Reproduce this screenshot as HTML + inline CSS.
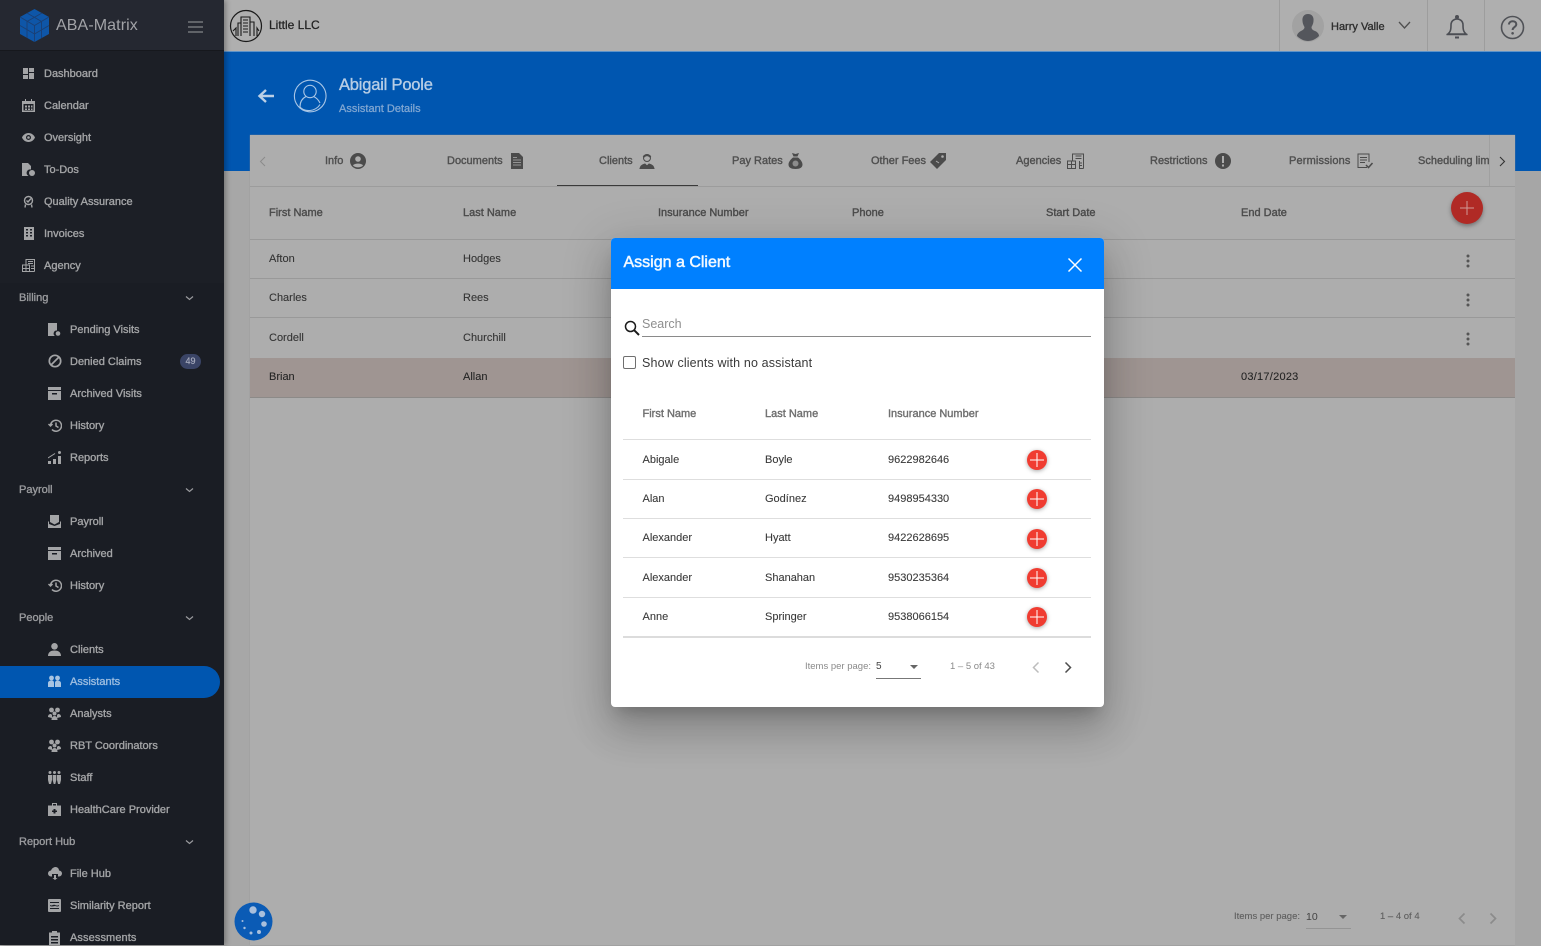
<!DOCTYPE html>
<html><head><meta charset="utf-8"><style>
html,body{margin:0;padding:0;width:1541px;height:945px;overflow:hidden;background:#a6a6a6;font-family:"Liberation Sans",Arial,sans-serif}
.a{position:absolute}
.t{position:absolute;white-space:nowrap;line-height:16px;transform:translateY(-7px)}
.s{font-size:11px;color:#a3a4a6;-webkit-text-stroke:.35px #a3a4a6}
.g{font-size:11px;color:#9a9b9e;-webkit-text-stroke:.35px #9a9b9e}
.h{font-size:11px;color:#4c4c4c;-webkit-text-stroke:.4px #4c4c4c}
.r{font-size:11px;color:#333;-webkit-text-stroke:.1px #333}
.th{font-size:11px;color:#707070;-webkit-text-stroke:.4px #707070}
.td{font-size:11px;color:#3a3a3a;-webkit-text-stroke:.1px #3a3a3a}
.tab{font-size:11px;color:#505050;-webkit-text-stroke:.4px #505050}
.i{position:absolute;fill:#a3a4a6}
.l{position:absolute;height:1px}
</style></head><body>
<div class="a" style="left:224px;top:0;width:1317px;height:51px;background:#afafaf"></div>
<div class="a" style="left:224px;top:51px;width:1317px;height:120px;background:#0056b0"></div>
<div class="a" style="left:224px;top:51px;width:1317px;height:1px;background:#5d93c9"></div>
<div class="a" style="left:224px;top:171px;width:26px;height:774px;background:#a7a7a7"></div>
<div class="a" style="left:250px;top:135px;width:1265px;height:810px;background:#adadad;box-shadow:0 0 1px #8f8f8f"></div>
<div class="a" style="left:1515px;top:171px;width:26px;height:774px;background:#a6a6a6"></div>

<!-- top bar -->
<svg class="a" style="left:229px;top:9px" width="34" height="34" viewBox="0 0 34 34" fill="none" stroke="#1a1a1a"><circle cx="17" cy="17" r="15.500" stroke-width="1.200"/><path d="M12 27V8h9v19M9 27V14h3M21 13h4v14M4 22l3-3v8M30 22l-2-3v8M14 11h5M14 14h5M14 17h5M14 20h5M14 23h5" stroke-width="1.100"/></svg>
<div class="t" style="left:269px;top:24px;font-size:12px;color:#222;-webkit-text-stroke:.25px #222">Little LLC</div>
<div class="a" style="left:1279px;top:0;width:1px;height:51px;background:#9d9d9d"></div>
<div class="a" style="left:1427px;top:0;width:1px;height:51px;background:#9d9d9d"></div>
<div class="a" style="left:1484px;top:0;width:1px;height:51px;background:#9d9d9d"></div>
<svg class="a" style="left:1292px;top:10px" width="32" height="32" viewBox="0 0 32 32"><circle cx="16" cy="16" r="16" fill="#a2a2a2"/><path d="M16 4c4 0 6 3 5.500 7-.2 3-1.500 5-2 6 0 2 1 3 3.500 4s4 3 4 5c-3 3-7 5-11 5s-8-2-11-5c0-2 2-4 4-5s3.500-2 3.500-4c-.5-1-1.800-3-2-6C10 7 12 4 16 4z" fill="#54565c"/></svg>
<div class="t" style="left:1331px;top:26px;font-size:11px;color:#2f2f2f;-webkit-text-stroke:.35px #2f2f2f">Harry Valle</div>
<svg class="a" style="left:1398px;top:21px" width="13" height="9" viewBox="0 0 13 9" fill="none" stroke="#4f4f4f" stroke-width="1.300"><path d="M1 1l5.500 6L12 1"/></svg>
<svg class="a" style="left:1445px;top:14px" width="24" height="25" viewBox="0 0 24 25" fill="none" stroke="#4c4e54" stroke-width="1.600"><path d="M3 20c2-2 3-3 3-9 0-4 3-6 6-6s6 2 6 6c0 6 1 7 3 9zM1.500 20.500h21"/><circle cx="12" cy="3" r="1.200" fill="#4c4e54"/><path d="M10 23.500h4" stroke-width="2"/></svg>
<svg class="a" style="left:1500px;top:15px" width="25" height="25" viewBox="0 0 25 25" fill="none" stroke="#505257" stroke-width="1.600"><circle cx="12.500" cy="12.500" r="11"/><path d="M8.800 9.500c.3-2.200 2-3.300 3.800-3.300 2.200 0 3.700 1.300 3.700 3.100 0 2.800-3.700 2.800-3.700 5.700" stroke-width="2"/><circle cx="12.600" cy="18.300" r="1.300" fill="#505257" stroke="none"/></svg>

<!-- header -->
<svg class="a" style="left:257px;top:88px" width="18" height="16" viewBox="0 0 18 16" fill="none" stroke="#bcd0e6" stroke-width="2.400"><path d="M17 8H3M9 2L2.500 8 9 14"/></svg>
<svg class="a" style="left:293px;top:79px" width="34" height="34" viewBox="0 0 34 34" fill="none" stroke="#a9c6e6" stroke-width="1.100"><path d="M9 3.500A15.800 15.800 0 1 1 5 27"/><path d="M5 27A15.800 15.800 0 0 1 9 3.500"/><circle cx="17" cy="12.500" r="6.200"/><path d="M7 28c0-6 3-9 6-10.500M27 24c-1.500-3-4-5.500-6.500-6.500M7 28c2 2.500 6 3.800 10 3.500 4-.3 8-2.500 10-6"/></svg>
<div class="t" style="left:339px;top:84px;font-size:16.500px;color:#b7cde5;-webkit-text-stroke:.35px #b7cde5;letter-spacing:-.2px">Abigail Poole</div>
<div class="t" style="left:339px;top:108px;font-size:11px;color:#7fa6d2;-webkit-text-stroke:.3px #7fa6d2;letter-spacing:.02px">Assistant Details</div>

<!-- tabs -->
<svg class="a" style="left:259px;top:156px" width="7" height="11" viewBox="0 0 7 11" fill="none" stroke="#8b8b8b"><path d="M6 1L1.500 5.500 6 10"/></svg>
<div class="t tab" style="left:325px;top:160px">Info</div>
<svg class="a" style="left:350px;top:153px" width="16" height="16" viewBox="0 0 16 16"><circle cx="8" cy="8" r="8" fill="#4b4b4b"/><circle cx="8" cy="6" r="2.800" fill="#adadad"/><path d="M3 12.500c1-2.500 9-2.500 10 0-2.500 2.500-7.500 2.500-10 0z" fill="#adadad"/></svg>
<div class="t tab" style="left:447px;top:160px">Documents</div>
<svg class="a" style="left:510px;top:153px" width="14" height="16" viewBox="0 0 14 16"><path d="M1 0h8l4 4v12H1z" fill="#4b4b4b"/><path d="M3 7h8M3 9.500h8M3 12h8M3 4.500h4" stroke="#adadad" stroke-width=".8"/></svg>
<div class="t tab" style="left:599px;top:160px">Clients</div>
<svg class="a" style="left:639px;top:153px" width="16" height="16" viewBox="0 0 16 16" fill="none" stroke="#4b4b4b"><circle cx="8" cy="5" r="3.500"/><path d="M4.500 4c2-2.500 5-2.500 7 0" stroke-width="2"/><path d="M1 15.500c.5-3 3-4 5-4.500l2 2 2-2c2 .5 4.500 1.500 5 4.500z" fill="#4b4b4b"/></svg>
<div class="a" style="left:557px;top:185px;width:141px;height:1px;background:#3a3a3a"></div>
<div class="t tab" style="left:732px;top:160px">Pay Rates</div>
<svg class="a" style="left:788px;top:153px" width="15" height="16" viewBox="0 0 15 16"><path d="M4 0l3.500 1L11 0 9.500 3.500h-4zM5 4.500h5c2.500 2 4.500 4.500 4.500 7 0 3-2.500 4.500-7 4.500s-7-1.500-7-4.500c0-2.500 2-5 4.500-7z" fill="#4b4b4b"/><circle cx="7.500" cy="10.500" r="3" fill="#8d8d8d"/></svg>
<div class="t tab" style="left:871px;top:160px">Other Fees</div>
<svg class="a" style="left:930px;top:153px" width="16" height="16" viewBox="0 0 16 16"><path d="M9 0h7v7l-9 9-7-7z" fill="#4b4b4b"/><circle cx="12.500" cy="3.500" r="1.300" fill="#adadad"/><path d="M6 8l3 2" stroke="#adadad"/></svg>
<div class="t tab" style="left:1016px;top:160px">Agencies</div>
<svg class="a" style="left:1067px;top:153px" width="17" height="16" viewBox="0 0 17 16" fill="none" stroke="#4b4b4b"><path d="M5.500 8V1h11v14.500M.5 15.500V8h8v7.500zM.5 11.500h8M4.500 8v7.500M12.500 8v7.500h4M8.500 3h6M8.500 5.500h6M12 10h3M12 12.500h3" stroke-width="1"/></svg>
<div class="t tab" style="left:1150px;top:160px">Restrictions</div>
<svg class="a" style="left:1215px;top:153px" width="16" height="16" viewBox="0 0 16 16"><circle cx="8" cy="8" r="8" fill="#4b4b4b"/><rect x="7" y="3" width="2" height="7" fill="#adadad"/><rect x="7" y="11.500" width="2" height="2" fill="#adadad"/></svg>
<div class="t tab" style="left:1289px;top:160px;letter-spacing:.15px">Permissions</div>
<svg class="a" style="left:1357px;top:153px" width="16" height="16" viewBox="0 0 16 16" fill="none" stroke="#4b4b4b"><path d="M10 14.500H1V1h11v8M3 4.500h7M3 7h7M3 9.500h5"/><path d="M9 12l2.500 2.500L15.500 10" stroke-width="1.500"/></svg>
<div class="a" style="left:1250px;top:135px;width:240px;height:51px;overflow:hidden"><div class="t tab" style="left:168px;top:25px">Scheduling limits</div></div>
<div class="a" style="left:1489px;top:135px;width:1px;height:51px;background:#a0a0a0"></div>
<svg class="a" style="left:1499px;top:156px" width="7" height="11" viewBox="0 0 7 11" fill="none" stroke="#333" stroke-width="1.100"><path d="M1 1l4.500 4.500L1 10"/></svg>
<div class="l" style="left:250px;top:186px;width:1265px;background:#9c9c9c"></div>

<!-- bg table -->
<div class="t h" style="left:269px;top:212px">First Name</div>
<div class="t h" style="left:463px;top:212px">Last Name</div>
<div class="t h" style="left:658px;top:212px">Insurance Number</div>
<div class="t h" style="left:852px;top:212px">Phone</div>
<div class="t h" style="left:1046px;top:212px">Start Date</div>
<div class="t h" style="left:1241px;top:212px">End Date</div>
<div class="a" style="left:1451px;top:192px;width:32px;height:32px;border-radius:50%;background:#b02a25;box-shadow:0 2px 4px rgba(0,0,0,.35)"></div>
<svg class="a" style="left:1459px;top:200px" width="16" height="16" viewBox="0 0 16 16" stroke="#d09a97" stroke-width="1"><path d="M8 1v14M1 8h14"/></svg>
<div class="l" style="left:250px;top:239px;width:1265px;background:#999"></div>
<div class="l" style="left:250px;top:278px;width:1265px;background:#999"></div>
<div class="l" style="left:250px;top:317px;width:1265px;background:#999"></div>
<div class="a" style="left:250px;top:358px;width:1265px;height:39px;background:#9f9592;border-bottom:1px solid #8c8a88"></div>
<div class="t r" style="left:269px;top:258px">Afton</div><div class="t r" style="left:463px;top:258px">Hodges</div>
<div class="t r" style="left:269px;top:297px">Charles</div><div class="t r" style="left:463px;top:297px">Rees</div>
<div class="t r" style="left:269px;top:337px">Cordell</div><div class="t r" style="left:463px;top:337px">Churchill</div>
<div class="t r" style="left:269px;top:376px;color:#222">Brian</div><div class="t r" style="left:463px;top:376px;color:#222">Allan</div>
<div class="t r" style="left:1241px;top:376px;color:#222;letter-spacing:.25px">03/17/2023</div>
<svg class="a" style="left:1465px;top:254px" width="6" height="14" fill="#555"><circle cx="3" cy="2" r="1.500"/><circle cx="3" cy="7" r="1.500"/><circle cx="3" cy="12" r="1.500"/></svg>
<svg class="a" style="left:1465px;top:293px" width="6" height="14" fill="#555"><circle cx="3" cy="2" r="1.500"/><circle cx="3" cy="7" r="1.500"/><circle cx="3" cy="12" r="1.500"/></svg>
<svg class="a" style="left:1465px;top:332px" width="6" height="14" fill="#555"><circle cx="3" cy="2" r="1.500"/><circle cx="3" cy="7" r="1.500"/><circle cx="3" cy="12" r="1.500"/></svg>

<!-- bottom pager -->
<div class="t" style="left:1234px;top:916px;font-size:9.500px;color:#5e5e5e;-webkit-text-stroke:.1px #5e5e5e">Items per page:</div>
<div class="t" style="left:1306px;top:916px;font-size:10.500px;color:#444">10</div>
<div class="l" style="left:1306px;top:928px;width:45px;background:#949494"></div>
<svg class="a" style="left:1339px;top:915px" width="8" height="4" fill="#666"><path d="M0 0h8L4 4z"/></svg>
<div class="t" style="left:1380px;top:916px;font-size:9.500px;color:#5e5e5e;-webkit-text-stroke:.1px #5e5e5e">1 – 4 of 4</div>
<svg class="a" style="left:1457px;top:912px" width="9" height="13" fill="none" stroke="#8b8b8b" stroke-width="1.700"><path d="M7.500 1.500l-5 5 5 5"/></svg>
<svg class="a" style="left:1489px;top:912px" width="9" height="13" fill="none" stroke="#8b8b8b" stroke-width="1.700"><path d="M1.500 1.500l5 5-5 5"/></svg>

<!-- sidebar -->
<div class="a" style="left:0;top:0;width:224px;height:945px;background:#1c1f26;box-shadow:2px 0 5px rgba(0,0,0,.3)"></div>
<div class="a" style="left:0;top:0;width:224px;height:51px;background:#252831;border-bottom:1px solid #16181d;box-sizing:border-box"></div>
<svg class="a" style="left:20px;top:9px" width="29" height="33" viewBox="0 0 29 33"><path d="M14.500 0L29 8v17l-14.500 8L0 25V8z" fill="#0e56a8"/><path d="M14.500 16.500V33M14.500 16.500L0 8M14.500 16.500L29 8M7 4l14.500 8.500v16.500M22 4L7 12.500V29M0 16.500l14.500 8.500L29 16.500" stroke="#1b3f73" stroke-width=".9" fill="none"/></svg>
<div class="t" style="left:56px;top:25px;font-size:16px;color:#a2a3a7;letter-spacing:.1px">ABA-Matrix</div>
<svg class="a" style="left:188px;top:21px" width="15" height="12" stroke="#85868a" stroke-width="1.200"><path d="M0 1h15M0 6h15M0 11h15"/></svg>

<div class="t s" style="left:44px;top:73px">Dashboard</div>
<svg class="i" style="left:23px;top:68px" width="11" height="11"><path d="M0 0h5v6H0zM6 0h5v4H6zM0 7h5v4H0zM6 5h5v6H6z"/></svg>
<div class="t s" style="left:44px;top:105px">Calendar</div>
<svg class="i" style="left:22px;top:99px" width="13" height="13" viewBox="0 0 13 13"><path d="M3 0h1v2h5V0h1v2h3v11H0V2h3zM1.500 5v6.500h10V5zM3 6.500h2v2H3zM6 6.500h2v2H6zM9 6.500h1.500v2H9zM3 9.500h2V11H3zM6 9.500h2V11H6zM9 9.500h1.500V11H9z"/></svg>
<div class="t s" style="left:44px;top:137px">Oversight</div>
<svg class="i" style="left:22px;top:133px" width="13" height="9" viewBox="0 0 13 9"><path fill-rule="evenodd" d="M6.500 0C9.500 0 12 2 13 4.500 12 7 9.500 9 6.500 9S1 7 0 4.500C1 2 3.500 0 6.500 0zm0 2a2.500 2.500 0 1 0 0 5 2.500 2.500 0 0 0 0-5z"/><circle cx="6.500" cy="4.500" r="1.300"/></svg>
<div class="t s" style="left:44px;top:169px">To-Dos</div>
<svg class="i" style="left:22px;top:163px" width="13" height="13" viewBox="0 0 13 13"><path d="M0 0h6l3 3v3.500A3.500 3.500 0 0 0 6.500 13H0z"/><circle cx="10" cy="10" r="3"/></svg>
<div class="t s" style="left:44px;top:201px">Quality Assurance</div>
<svg class="a" style="left:23px;top:195px" width="11" height="13" viewBox="0 0 11 13" fill="none" stroke="#a3a4a6" stroke-width="1.400"><circle cx="5.500" cy="5.500" r="4"/><path d="M3.500 5.500l1.500 1.500L8 3.500M2.500 9.500L2 12.500M8.500 9.500l.5 3"/></svg>
<div class="t s" style="left:44px;top:233px">Invoices</div>
<svg class="i" style="left:24px;top:227px" width="10" height="13" viewBox="0 0 10 13"><path fill-rule="evenodd" d="M0 0h10v13H0zM2 2v1.500h2V2zm4 0v1.500h2V2zM2 5v1.500h2V5zm4 0v1.500h2V5zM2 8v1.500h2V8zm4 0v1.500h2V8z"/></svg>
<div class="t s" style="left:44px;top:265px">Agency</div>
<svg class="a" style="left:22px;top:259px" width="13" height="13" viewBox="0 0 13 13" fill="none" stroke="#a3a4a6"><path d="M4 6V.5h8.500v12M.5 12.500V6h7v6.500zM.5 9.500h7M4 6v6.500M7.500 12.500h5M6 2.500h5M6 4.500h5M9 7h3M9 9.500h3"/></svg>

<div class="a" style="left:0;top:283px;width:224px;height:662px;background:#1a1d24"></div>
<div class="t g" style="left:19px;top:297px">Billing</div>
<div class="t s" style="left:70px;top:329px">Pending Visits</div>
<svg class="i" style="left:48px;top:323px" width="13" height="13" viewBox="0 0 13 13"><path d="M0 0h9v7.500A3 3 0 0 0 7 13H0z"/><circle cx="10" cy="10.500" r="2.300"/></svg>
<div class="t s" style="left:70px;top:361px">Denied Claims</div>
<svg class="a" style="left:48px;top:354px" width="14" height="14" viewBox="0 0 14 14" fill="none" stroke="#a3a4a6" stroke-width="1.700"><circle cx="7" cy="7" r="5.700"/><path d="M3 11l8-8"/></svg>
<div class="a" style="left:180px;top:354px;width:21px;height:15px;border-radius:8px;background:#3a4466;color:#a7abbd;font-size:9px;line-height:15px;text-align:center;-webkit-text-stroke:.2px #a7abbd">49</div>
<div class="t s" style="left:70px;top:393px">Archived Visits</div>
<svg class="i" style="left:48px;top:387px" width="13" height="13" viewBox="0 0 13 13"><path fill-rule="evenodd" d="M0 0h13v3H0zM0 4h13v9H0zm4 2v1.500h5V6z"/></svg>
<div class="t s" style="left:70px;top:425px">History</div>
<svg class="a" style="left:48px;top:419px" width="14" height="13" viewBox="0 0 14 13" fill="none" stroke="#a3a4a6" stroke-width="1.500"><path d="M2.500 6.500A5.500 5.500 0 1 1 4 10.500M.5 5l2 2 2-2M8 3.500V7l2.500 1.500"/></svg>
<div class="t s" style="left:70px;top:457px">Reports</div>
<svg class="i" style="left:48px;top:451px" width="13" height="13" viewBox="0 0 13 13"><path d="M0 10h3v3H0zM5 8h3v5H5zM10 5h3v8h-3z"/><circle cx="11.500" cy="1.500" r="1.500"/><path d="M0 7l7-4.500" stroke="#a3a4a6" fill="none"/></svg>
<div class="t g" style="left:19px;top:489px">Payroll</div>
<div class="t s" style="left:70px;top:521px">Payroll</div>
<svg class="i" style="left:48px;top:515px" width="13" height="13" viewBox="0 0 13 13"><path d="M2 0h9v7l-4.500 2.500L2 7zM0 6l1 1v2l5.500 2L12 9V7l1-1v7H0z"/></svg>
<div class="t s" style="left:70px;top:553px">Archived</div>
<svg class="i" style="left:48px;top:547px" width="13" height="13" viewBox="0 0 13 13"><path fill-rule="evenodd" d="M0 0h13v3H0zM0 4h13v9H0zm4 2v1.500h5V6z"/></svg>
<div class="t s" style="left:70px;top:585px">History</div>
<svg class="a" style="left:48px;top:579px" width="14" height="13" viewBox="0 0 14 13" fill="none" stroke="#a3a4a6" stroke-width="1.500"><path d="M2.500 6.500A5.500 5.500 0 1 1 4 10.500M.5 5l2 2 2-2M8 3.500V7l2.500 1.500"/></svg>
<div class="t g" style="left:19px;top:617px">People</div>
<div class="t s" style="left:70px;top:649px">Clients</div>
<svg class="i" style="left:48px;top:643px" width="13" height="13" viewBox="0 0 13 13"><circle cx="6.500" cy="3.300" r="3.300"/><path d="M0 13c0-4 3-5.500 6.500-5.500S13 9 13 13z"/></svg>
<div class="a" style="left:0;top:666px;width:220px;height:32px;border-radius:0 16px 16px 0;background:#0056b0"></div>
<div class="t" style="left:70px;top:681px;font-size:11px;color:#9cbde0;-webkit-text-stroke:.35px #9cbde0">Assistants</div>
<svg class="i" style="left:48px;top:675px;fill:#a8c4e2" width="13" height="13" viewBox="0 0 13 13"><circle cx="3.500" cy="3" r="2.400"/><circle cx="9.500" cy="3" r="2.400"/><path d="M0 12V8c0-1.500 1.500-2.500 3.500-2.500S6 6.500 6 8v4zM7 12V8c0-1.500 1-2.500 2.500-2.500S13 6.500 13 8v4z"/></svg>
<div class="t s" style="left:70px;top:713px">Analysts</div>
<svg class="i" style="left:48px;top:707px" width="13" height="13" viewBox="0 0 13 13"><circle cx="3.500" cy="3" r="2.400"/><circle cx="9.500" cy="3" r="2.400"/><circle cx="6.500" cy="6.500" r="2"/><path d="M0 10c0-2 1-3 3-3l1 1v3zM13 10c0-2-1-3-3-3L9 8v3zM3.500 13c0-2.500 1-4 3-4s3 1.500 3 4z"/></svg>
<div class="t s" style="left:70px;top:745px">RBT Coordinators</div>
<svg class="i" style="left:48px;top:739px" width="13" height="13" viewBox="0 0 13 13"><circle cx="3.500" cy="3" r="2.400"/><circle cx="9.500" cy="3" r="2.400"/><circle cx="6.500" cy="6.500" r="2"/><path d="M0 10c0-2 1-3 3-3l1 1v3zM13 10c0-2-1-3-3-3L9 8v3zM3.500 13c0-2.500 1-4 3-4s3 1.500 3 4z"/></svg>
<div class="t s" style="left:70px;top:777px">Staff</div>
<svg class="i" style="left:48px;top:771px" width="13" height="13" viewBox="0 0 13 13"><circle cx="2" cy="1.500" r="1.500"/><circle cx="6.500" cy="1.500" r="1.500"/><circle cx="11" cy="1.500" r="1.500"/><path d="M0 4h4v5L3 13H1L0 9zM4.700 4h3.600v5l-1 4H5.700l-1-4zM9 4h4v5l-1 4h-2L9 9z"/></svg>
<div class="t s" style="left:70px;top:809px">HealthCare Provider</div>
<svg class="i" style="left:48px;top:803px" width="13" height="13" viewBox="0 0 13 13"><path fill-rule="evenodd" d="M4 0h5v2.500h4V13H0V2.500h4zm1 1v1.500h3V1zM5.500 6v1.500H4v1.500h1.500v1.500H7.500V9H9V7.500H7.500V6z"/></svg>
<div class="t g" style="left:19px;top:841px">Report Hub</div>
<div class="t s" style="left:70px;top:873px">File Hub</div>
<svg class="i" style="left:48px;top:867px" width="14" height="13" viewBox="0 0 14 13"><path d="M4 9.500H3a3 3 0 0 1 0-6C4 1 6 0 7.500 0 9.500 0 11 1.500 11 3.500a3 3 0 0 1 0 6h-1V7H4z"/><path d="M6 8h2v3h1.500L7 13l-2.500-2H6z"/></svg>
<div class="t s" style="left:70px;top:905px">Similarity Report</div>
<svg class="i" style="left:48px;top:899px" width="13" height="13" viewBox="0 0 13 13"><path fill-rule="evenodd" d="M1 0h11a1 1 0 0 1 1 1v11a1 1 0 0 1-1 1H1a1 1 0 0 1-1-1V1a1 1 0 0 1 1-1zm1 3v1h9V3zm0 3c2 1.500 3-1 5 0s3 .5 4 0v1c-2 1-3 0-4 0s-3 1-5 0zm0 3v1h9V9z"/></svg>
<div class="t s" style="left:70px;top:937px;letter-spacing:.1px">Assessments</div>
<svg class="i" style="left:49px;top:931px" width="11" height="14" viewBox="0 0 11 14"><path fill-rule="evenodd" d="M3 0h5v1.500h3V14H0V1.500h3zM2 5v1.500h7V5zm0 3v1.500h7V8zm0 3v1.500h7V11z"/></svg>

<svg class="a" style="left:184px;top:295px" width="11" height="7" fill="none" stroke="#9a9b9e" stroke-width="1.200"><path d="M2 1.500l3.500 3 3.500-3"/></svg>
<svg class="a" style="left:184px;top:487px" width="11" height="7" fill="none" stroke="#9a9b9e" stroke-width="1.200"><path d="M2 1.500l3.500 3 3.500-3"/></svg>
<svg class="a" style="left:184px;top:615px" width="11" height="7" fill="none" stroke="#9a9b9e" stroke-width="1.200"><path d="M2 1.500l3.500 3 3.500-3"/></svg>
<svg class="a" style="left:184px;top:839px" width="11" height="7" fill="none" stroke="#9a9b9e" stroke-width="1.200"><path d="M2 1.500l3.500 3 3.500-3"/></svg>

<!-- spinner -->
<svg class="a" style="left:234px;top:902px" width="39" height="39" viewBox="0 0 39 39"><circle cx="19.500" cy="19.500" r="19" fill="#0b5bb5"/><circle cx="19" cy="8" r="3.700" fill="#a9bfdc"/><circle cx="28" cy="12" r="3.200" fill="#a9bfdc"/><circle cx="30" cy="22" r="2.800" fill="#a9bfdc"/><circle cx="25" cy="30" r="2" fill="#a9bfdc"/><circle cx="17" cy="31" r="1.500" fill="#a9bfdc"/><circle cx="10.500" cy="26" r="1.200" fill="#a9bfdc"/><circle cx="8.500" cy="19" r="1" fill="#a9bfdc"/></svg>

<!-- modal -->
<div class="a" style="left:611px;top:238px;width:493px;height:469px;background:#fff;border-radius:4px;box-shadow:0 11px 15px -7px rgba(0,0,0,.2),0 24px 38px 3px rgba(0,0,0,.14),0 9px 46px 8px rgba(0,0,0,.12)"></div>
<div class="a" style="left:611px;top:238px;width:493px;height:51px;background:#0080ff;border-radius:4px 4px 0 0"></div>
<div class="t" style="left:623.500px;top:262px;font-size:16px;color:#f2f8ff;-webkit-text-stroke:.5px #f2f8ff">Assign a Client</div>
<svg class="a" style="left:1067px;top:257px" width="16" height="16" fill="none" stroke="#fff" stroke-width="1.500"><path d="M1.500 1.500l13 13M14.500 1.500l-13 13"/></svg>
<svg class="a" style="left:624px;top:320px" width="16" height="16" fill="none" stroke="#1a1a1a"><circle cx="6.500" cy="6.500" r="5" stroke-width="1.500"/><path d="M10 10l5 5" stroke-width="2"/></svg>
<div class="t" style="left:642px;top:323px;font-size:12.500px;color:#8e8e8e">Search</div>
<div class="l" style="left:642px;top:336px;width:449px;background:#8a8a8a"></div>
<div class="a" style="left:623px;top:356px;width:13px;height:13px;border:1px solid #6f6f6f;border-radius:2px;box-sizing:border-box"></div>
<div class="t" style="left:642px;top:362px;font-size:12.500px;color:#3a3a3a;letter-spacing:.14px">Show clients with no assistant</div>
<div class="t th" style="left:642.500px;top:413px">First Name</div>
<div class="t th" style="left:765px;top:413px">Last Name</div>
<div class="t th" style="left:888px;top:413px">Insurance Number</div>
<div class="l" style="left:623px;top:439px;width:468px;background:#dedede"></div>
<div class="l" style="left:623px;top:479px;width:468px;background:#dedede"></div>
<div class="l" style="left:623px;top:518px;width:468px;background:#dedede"></div>
<div class="l" style="left:623px;top:557px;width:468px;background:#dedede"></div>
<div class="l" style="left:623px;top:597px;width:468px;background:#dedede"></div>
<div class="a" style="left:623px;top:636px;width:468px;height:2px;background:#dcdcdc"></div>

<div class="t td" style="left:642.500px;top:459px">Abigale</div><div class="t td" style="left:765px;top:459px">Boyle</div><div class="t td" style="left:888px;top:459px">9622982646</div>
<div class="t td" style="left:642.500px;top:498px">Alan</div><div class="t td" style="left:765px;top:498px">Godínez</div><div class="t td" style="left:888px;top:498px">9498954330</div>
<div class="t td" style="left:642.500px;top:537px">Alexander</div><div class="t td" style="left:765px;top:537px">Hyatt</div><div class="t td" style="left:888px;top:537px">9422628695</div>
<div class="t td" style="left:642.500px;top:577px">Alexander</div><div class="t td" style="left:765px;top:577px">Shanahan</div><div class="t td" style="left:888px;top:577px">9530235364</div>
<div class="t td" style="left:642.500px;top:616px">Anne</div><div class="t td" style="left:765px;top:616px">Springer</div><div class="t td" style="left:888px;top:616px">9538066154</div>

<svg class="a" style="left:1024.500px;top:448px;overflow:visible" width="24" height="24"><circle cx="12" cy="12" r="10" fill="#f03c31" style="filter:drop-shadow(0 1px 2px rgba(0,0,0,.35))"/><path d="M12 5v14M5 12h14" stroke="#fff" stroke-width="1"/></svg>
<svg class="a" style="left:1024.500px;top:487px;overflow:visible" width="24" height="24"><circle cx="12" cy="12" r="10" fill="#f03c31" style="filter:drop-shadow(0 1px 2px rgba(0,0,0,.35))"/><path d="M12 5v14M5 12h14" stroke="#fff" stroke-width="1"/></svg>
<svg class="a" style="left:1024.500px;top:527px;overflow:visible" width="24" height="24"><circle cx="12" cy="12" r="10" fill="#f03c31" style="filter:drop-shadow(0 1px 2px rgba(0,0,0,.35))"/><path d="M12 5v14M5 12h14" stroke="#fff" stroke-width="1"/></svg>
<svg class="a" style="left:1024.500px;top:566px;overflow:visible" width="24" height="24"><circle cx="12" cy="12" r="10" fill="#f03c31" style="filter:drop-shadow(0 1px 2px rgba(0,0,0,.35))"/><path d="M12 5v14M5 12h14" stroke="#fff" stroke-width="1"/></svg>
<svg class="a" style="left:1024.500px;top:605px;overflow:visible" width="24" height="24"><circle cx="12" cy="12" r="10" fill="#f03c31" style="filter:drop-shadow(0 1px 2px rgba(0,0,0,.35))"/><path d="M12 5v14M5 12h14" stroke="#fff" stroke-width="1"/></svg>

<div class="t" style="left:805px;top:666px;font-size:9.500px;color:#8a8a8a">Items per page:</div>
<div class="t" style="left:876px;top:666px;font-size:10px;color:#444">5</div>
<div class="l" style="left:876px;top:678px;width:45px;background:#777"></div>
<svg class="a" style="left:910px;top:665px" width="8" height="4" fill="#666"><path d="M0 0h8L4 4z"/></svg>
<div class="t" style="left:950px;top:666px;font-size:9.500px;color:#8a8a8a">1 – 5 of 43</div>
<svg class="a" style="left:1031px;top:661px" width="9" height="13" fill="none" stroke="#bdbdbd" stroke-width="1.500"><path d="M7.500 1.500l-5 5 5 5"/></svg>
<svg class="a" style="left:1064px;top:661px" width="9" height="13" fill="none" stroke="#4d4d4d" stroke-width="1.500"><path d="M1.500 1.500l5 5-5 5"/></svg>
</body></html>
